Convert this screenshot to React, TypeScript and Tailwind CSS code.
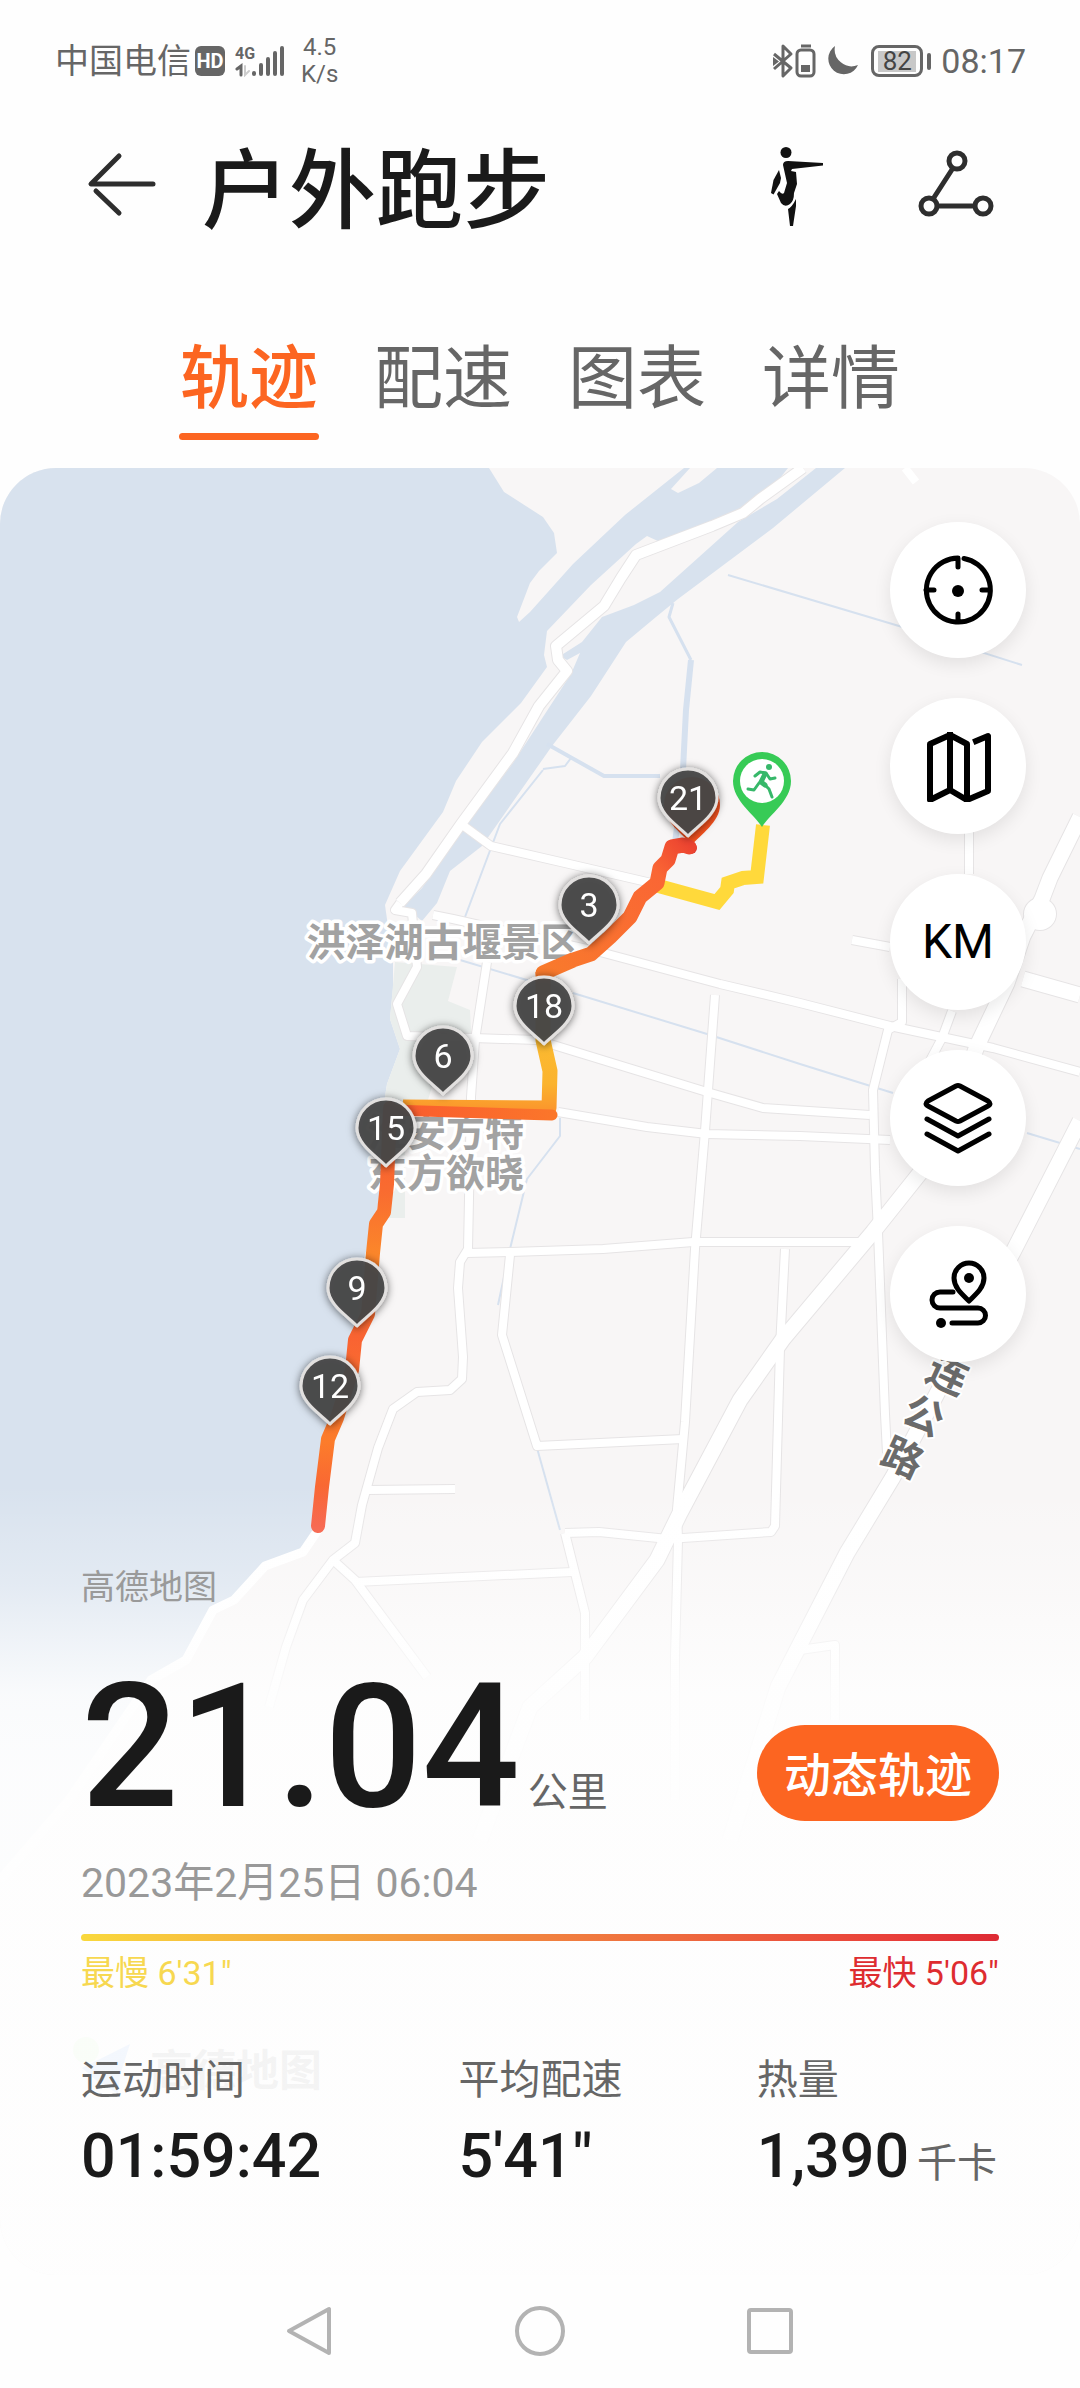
import React from "react";

const tabs = ["轨迹", "配速", "图表", "详情"];

const pins = [
  { km: 21, x: 688, y: 798 },
  { km: 3, x: 589, y: 905 },
  { km: 18, x: 544, y: 1006 },
  { km: 6, x: 443, y: 1056 },
  { km: 15, x: 386, y: 1128 },
  { km: 9, x: 357, y: 1288 },
  { km: 12, x: 330, y: 1386 },
];

const minorRoads = [
  "M461 824L491 846L565 863L660 885",
  "M400 903L395 910L412 913L417 967L397 1004L407 1036L473 1038L537 1040L560 1047L707 1092L763 1108L870 1115",
  "M433 915L453 919L600 952L720 984L800 1003L890 1026L993 1048L1080 1072",
  "M487 962L475 1040L471 1097L468 1249L460 1262L458 1288L463 1357L462 1379L450 1390L417 1392L393 1409L378 1448L362 1505L355 1543L333 1560L303 1600L286 1647L269 1707",
  "M333 1560L355 1580L427 1677",
  "M368 1490L455 1489",
  "M355 1582L572 1572",
  "M467 1253L510 1252L603 1249L693 1242L860 1242",
  "M558 1112L647 1127L707 1134L800 1136L890 1140",
  "M715 995L705 1131L695 1249L685 1422L677 1509L678 1540L675 1657L675 1800",
  "M510 1255L502 1335L537 1446L683 1439",
  "M565 1533L585 1613L585 1720",
  "M565 1533L599 1532L668 1539L771 1532L775 1526L780 1348L785 1249",
  "M902 979L902 1022L888 1030L873 1090L875 1169L878 1232L885 1414L887 1453",
  "M952 1011L942 1038L925 1070",
  "M852 940L890 947",
  "M969 800L969 874",
  "M800 1650L835 1645L835 1720",
];

const majorRoads = [
  "M1080 817L1050 878L1042 899L1023 936L1007 983L977 1046L940 1150L920 1173L873 1232L783 1339L740 1400L680 1513L657 1560L585 1657L530 1707L480 1840",
  "M1080 1121L1013 1252L960 1350L893 1477L847 1553L778 1687L730 1840",
  "M1023 979L1080 995",
];

const embankment =
  "M803 468L760 499L743 513L712 526L636 555L621 578L604 606L556 646L558 660L567 671L539 706L513 753L461 824L426 874L400 903";

function Pin({ x, y, km }: { x: number; y: number; km: number }) {
  return (
    <g filter="url(#pinShadow)">
      <path
        transform={`translate(${x} ${y})`}
        d="M0 38C-8 29 -29 17 -29 0A29 29 0 1 1 29 0C29 17 8 29 0 38Z"
        fill="#474747"
        fillOpacity="0.93"
        stroke="#e2e0df"
        strokeWidth="3"
      />
      <text x={x} y={y + 12} textAnchor="middle" fontSize="34" fill="#fff" className="font-[Roboto,sans-serif]">
        {km}
      </text>
    </g>
  );
}

function MapCanvas() {
  return (
    <svg
      className="absolute inset-0 h-full w-full font-['Noto_Sans_CJK_SC',sans-serif]"
      viewBox="0 468 1080 1809"
      preserveAspectRatio="xMidYMin slice"
      aria-label="跑步轨迹地图"
      strokeLinejoin="round"
      fill="none"
    >
      <defs>
        <filter id="pinShadow" x="-40%" y="-40%" width="180%" height="180%">
          <feDropShadow dx="0" dy="1" stdDeviation="4" floodColor="#000" floodOpacity="0.6" />
        </filter>
        <linearGradient id="upper" gradientUnits="userSpaceOnUse" x1="690" y1="845" x2="543" y2="972">
          <stop offset="0" stopColor="#ec4330" />
          <stop offset="0.22" stopColor="#fa6634" />
          <stop offset="1" stopColor="#f97a2c" />
        </linearGradient>
        <linearGradient id="middle" gradientUnits="userSpaceOnUse" x1="0" y1="972" x2="0" y2="1112">
          <stop offset="0" stopColor="#f97a2c" />
          <stop offset="0.5" stopColor="#fcba30" />
          <stop offset="0.8" stopColor="#fbb32e" />
          <stop offset="1" stopColor="#fb942c" />
        </linearGradient>
        <linearGradient id="cross" gradientUnits="userSpaceOnUse" x1="390" y1="0" x2="555" y2="0">
          <stop offset="0" stopColor="#fa5a2e" />
          <stop offset="1" stopColor="#fb762a" />
        </linearGradient>
        <linearGradient id="lower" gradientUnits="userSpaceOnUse" x1="0" y1="1106" x2="0" y2="1526">
          <stop offset="0" stopColor="#fa5a2e" />
          <stop offset="0.2" stopColor="#f96b30" />
          <stop offset="0.35" stopColor="#fb862a" />
          <stop offset="0.55" stopColor="#f96332" />
          <stop offset="0.8" stopColor="#fc7c2b" />
          <stop offset="1" stopColor="#f6553a" />
        </linearGradient>
      </defs>

      <rect y="468" width="1080" height="1809" fill="#f8f6f6" />

      {/* lake, canal and the land between them */}
      <path
        d="M0 468L788 468L769 492L738 515L660 542L647 536L636 544L591 585L547 631L544 655L547 667L521 703L482 742L456 781L443 812L400 871L385 905L393 962L393 988L390 1019L400 1049L387 1084L383 1110L385 1166L375 1220L363 1262L357 1330L335 1400L322 1450L318 1535L303 1552L265 1563L234 1597L213 1607L186 1657L151 1677L69 1797L0 1880Z"
        fill="#d8e2ee"
      />
      <path
        d="M489 468L504 492L543 517L554 533L557 553L539 571L530 583L517 617L519 622L530 612L573 564L625 515L684 468Z"
        fill="#f8f6f6"
      />
      <path d="M690 468L671 489L678 493L699 483L717 468Z" fill="#f8f6f6" />
      <path
        d="M816 468L777 499L738 522L660 592L634 605L602 617L582 642L560 656L567 660L580 653L571 674L513 763L461 831L422 888L404 906L422 921L437 903L450 871L482 846L552 746L591 696L626 642L656 617L678 599L773 528L845 468Z"
        fill="#d8e2ee"
      />
      <path d="M395 962L457 967L448 1001L470 1010L472 1055L440 1060L425 1110L405 1120L405 1218L384 1218L383 1110L387 1084L400 1049L390 1019Z" fill="#eaeeec" />

      {/* creeks */}
      <g stroke="#d6e1ef" strokeWidth="2">
        <path d="M728 575L899 626L1022 665" />
        <path d="M573 993L707 1034L800 1064L893 1093" />
        <path d="M1027 1133L1080 1149" />
        <path d="M460 960L540 984" />
        <path d="M560 1118L560 1136L527 1179L510 1249L498 1305" />
        <path d="M537 1448L560 1530" />
        <path d="M543 770L500 824L465 917" />
        <path d="M673 603L669 617L691 660" strokeWidth="3" />
        <path d="M691 660L686 710L682 790L674 850" strokeWidth="6" />
        <path d="M547 744L604 776L660 776" strokeWidth="4" />
        <path d="M543 769L565 766L571 758" />
      </g>

      {/* road casings, then road surfaces */}
      <g stroke="#e6e4e5">
        {minorRoads.map((d) => (
          <path key={d} d={d} strokeWidth="10" />
        ))}
        {majorRoads.map((d) => (
          <path key={d} d={d} strokeWidth="17" />
        ))}
        <path d={embankment} strokeWidth="12" />
        <circle cx="1040" cy="914" r="17" fill="#e6e4e5" stroke="none" />
      </g>
      <g stroke="#fff">
        {minorRoads.map((d) => (
          <path key={d} d={d} strokeWidth="8" />
        ))}
        {majorRoads.map((d) => (
          <path key={d} d={d} strokeWidth="15" />
        ))}
        <path d={embankment} strokeWidth="10" />
        <path d="M905 468L916 482" strokeWidth="8" />
        <path d="M318 1530L303 1552L265 1566L234 1600L213 1610L186 1660L151 1680L69 1800L0 1880" strokeWidth="9" />
        <circle cx="1040" cy="914" r="16" fill="#fff" stroke="none" />
      </g>

      {/* place names */}
      <g fill="#a2a2a2" stroke="#fff" strokeWidth="7" fontSize="39" fontWeight="700" paintOrder="stroke">
        <text x="443" y="956" textAnchor="middle">洪泽湖古堰景区</text>
        <text x="524" y="1146" textAnchor="end">淮安方特</text>
        <text x="524" y="1187" textAnchor="end">东方欲晓</text>
      </g>
      <g fill="#6b6b6b" stroke="#fff" strokeWidth="4" fontSize="40" fontWeight="700" textAnchor="middle" paintOrder="stroke">
        <text transform="translate(948 1374) rotate(25)" y="15">连</text>
        <text transform="translate(924 1415) rotate(25)" y="15">公</text>
        <text transform="translate(903 1457) rotate(25)" y="15">路</text>
      </g>

      {/* provider watermark */}
      <path d="M82 2068L130 2044L120 2075L118 2094L96 2080Z" fill="#2f7bf0" />
      <circle cx="86" cy="2050" r="13" fill="#a9ee8c" />
      <text x="150" y="2086" fontSize="43" fontWeight="700" fill="#333">
        高德地图
      </text>

      {/* recorded run */}
      <g strokeWidth="14">
        <path d="M763 825L757 877L743 878L728 883L727 890L717 902L655 885" stroke="#ffd93b" strokeLinejoin="miter" />
        <path d="M543 972L543 1040L550 1071L549 1108L403 1107" stroke="url(#middle)" strokeWidth="15" />
        <path d="M552 1115L390 1110" stroke="url(#cross)" strokeWidth="11" strokeLinecap="round" />
        <path
          d="M390 1108L387 1184L384 1212L376 1224L373 1253L368 1314L355 1340L352 1370L337 1418L328 1439L322 1487L318 1526"
          stroke="url(#lower)"
          strokeLinecap="round"
        />
      </g>

      <path transform="translate(692 805)" d="M0 40C-8 30 -28 17 -28 0A28 28 0 1 1 28 0C28 17 8 30 0 40Z" fill="#f4511e" />
      <circle cx="691" cy="848" r="6" fill="#d8372f" />
      <path
        d="M689 847L683 845L672 847L668 860L660 868L657 883L640 897L630 917L610 937L591 954L573 960L543 973"
        stroke="url(#upper)"
        strokeWidth="15"
        strokeLinecap="round"
      />

      <g transform="translate(762 781)">
        <path d="M0 46C-7 34 -29 20 -29 0A29 29 0 1 1 29 0C29 20 7 34 0 46Z" fill="#37cb56" />
        <circle r="22" fill="#fff" />
        <g stroke="#37b86a" strokeWidth="3" strokeLinecap="round">
          <circle cx="7" cy="-14" r="3" fill="#37b86a" stroke="none" />
          <path d="M-7 -5L-2 -9L4 -8L8 -2L13 -3" />
          <path d="M-14 8L-8 9L-3 2" />
          <path d="M2 3L7 8L10 16" />
          <path d="M3 -7L-1 1L3 4" strokeWidth="5" />
        </g>
      </g>

      {pins.map((p) => (
        <Pin key={p.km} {...p} />
      ))}
    </svg>
  );
}

function MapButton({ label, children }: { label: string; children: React.ReactNode }) {
  return (
    <button
      type="button"
      aria-label={label}
      className="flex size-34 items-center justify-center rounded-full bg-white text-black shadow-[0_6px_18px_rgba(0,0,0,0.09)]"
    >
      {children}
    </button>
  );
}

function Icon({ children }: { children: React.ReactNode }) {
  return (
    <svg className="size-[72px]" viewBox="0 0 72 72" fill="none" stroke="currentColor" strokeWidth="5" strokeLinecap="round" strokeLinejoin="round">
      {children}
    </svg>
  );
}

function StatusBar() {
  return (
    <div className="flex h-[122px] items-center justify-between pr-[54px] pl-[55px] text-[#666]">
      <div className="flex items-center">
        <span className="text-[34px] leading-10">中国电信</span>
        <span className="ml-1 flex h-[30px] w-[30px] items-center justify-center rounded-[6px] bg-[#666] font-[Roboto,sans-serif] text-[20px] font-bold text-white">
          HD
        </span>
        <svg className="ml-[10px] h-8 w-[52px]" viewBox="0 0 52 32" fill="none" stroke="#666" strokeLinecap="round">
          <text x="0" y="14" fontSize="16" fontWeight="700" fill="#666" stroke="none" className="font-[Roboto,sans-serif]">
            4G
          </text>
          <path d="M6 30V21L2 24" strokeWidth="3" />
          <path d="M10 21V30L14 26" stroke="#ccc" strokeWidth="2" />
          <path d="M19 28V29M26 20V29M33 14V29M40 8V29M47 3V29" strokeWidth="4" />
        </svg>
        <span className="ml-[14px] text-center font-[Roboto,sans-serif] text-2xl leading-[27px]">
          4.5
          <br />
          K/s
        </span>
      </div>
      <div className="flex items-center">
        <svg className="h-9 w-[92px]" viewBox="0 0 92 36" fill="none" stroke="#666" strokeWidth="3" strokeLinejoin="round">
          <path d="M3 11L20 25L12 33V3L20 11L3 26" />
          <path d="M2 14L8 18.500L2 23Z" fill="#666" stroke="none" />
          <rect x="26" y="7" width="17" height="26" rx="4" />
          <path d="M30 3H40" strokeWidth="3" />
          <rect x="30" y="22" width="9" height="7" fill="#666" stroke="none" />
          <path d="M64 3A15.500 15.500 0 1 0 87 22A17 17 0 0 1 64 3Z" fill="#666" stroke="none" />
        </svg>
        <span className="ml-2 flex h-8 w-[52px] items-center justify-center rounded-lg border-3 border-[#666]">
          <span className="flex h-[21px] w-[38px] items-center justify-center bg-[#c8c8c8] font-[Roboto,sans-serif] text-[26px] leading-5 text-[#444]">
            82
          </span>
        </span>
        <span className="ml-1 h-[17px] w-1 rounded-full bg-[#666]" />
        <span className="ml-[10px] font-[Roboto,sans-serif] text-[34px] leading-10">08:17</span>
      </div>
    </div>
  );
}

function Header() {
  return (
    <header className="flex h-[132px] items-center pr-[82px] pl-[84px] text-[#1a1a1a]">
      <button type="button" aria-label="返回" className="-mt-2">
        <svg className="h-[72px] w-[76px]" viewBox="0 0 76 72" fill="none" stroke="#2e2e2e" strokeWidth="5" strokeLinecap="round" strokeLinejoin="round">
          <path d="M35 8L7 36H69" />
          <path d="M12 43L35 65" />
        </svg>
      </button>
      <h1 className="ml-[42px] flex-1 pt-2 text-[87px] leading-[120px] font-medium">户外跑步</h1>
      <button type="button" aria-label="跑姿">
        <svg className="h-[86px] w-[72px]" viewBox="0 0 72 86" fill="#111">
          <circle cx="20" cy="7.500" r="5.500" />
          <path d="M17 20Q17 16 22 16L57 18V20.500L26 24L25 26L30 27L31 39L28 48Q28 56 24 59Q19 63 15 58L11 49L13 46Q16 50 18 48L21 38Z" />
          <path d="M13 25L15 33L14 38L7.500 49.500L5 48L7.500 35Z" />
          <path d="M22 64Q26 62 30 54L30 61L27 81H24Z" />
        </svg>
      </button>
      <button type="button" aria-label="分享" className="ml-[76px]">
        <svg className="h-[84px] w-[84px]" viewBox="0 0 84 84" fill="none" stroke="#2e2e2e" strokeWidth="5">
          <circle cx="43" cy="15" r="8" />
          <circle cx="15" cy="60" r="8" />
          <circle cx="69" cy="60" r="8" />
          <path d="M39 22L19 53M23 60H61" />
        </svg>
      </button>
    </header>
  );
}

function Stat({ label, value, unit }: { label: string; value: string; unit?: string }) {
  return (
    <div>
      <dt className="text-[41px] leading-14 text-[#666]">{label}</dt>
      <dd className="mt-3 flex items-baseline gap-2 whitespace-nowrap">
        <span className="font-[Roboto,sans-serif] text-[61px] leading-18 font-medium">{value}</span>
        {unit && <span className="text-[40px] leading-14 text-[#666]">{unit}</span>}
      </dd>
    </div>
  );
}

export default function App() {
  return (
    <div className="flex min-h-screen flex-col bg-[#fefefe] font-[Roboto,'Noto_Sans_CJK_SC',sans-serif] text-[#1a1a1a]">
      <StatusBar />
      <Header />
      <nav className="flex justify-center gap-[54px] pt-20 pb-7">
        {tabs.map((t, i) => (
          <button key={t} type="button" className={i === 0 ? "w-[140px] font-medium text-[#fc6521]" : "w-[140px] text-[#666]"}>
            <span className="block text-[69px] leading-[92px]">{t}</span>
            <span className={i === 0 ? "mt-[7px] block h-[7px] rounded-full bg-[#fc6521]" : "mt-[7px] block h-[7px]"} />
          </button>
        ))}
      </nav>

      <main className="relative overflow-hidden rounded-[56px] pb-[83px]">
        <MapCanvas />
        <div className="absolute inset-x-0 bottom-0 h-[800px] bg-[linear-gradient(to_bottom,rgba(254,254,254,0)_10px,rgba(254,254,254,0.3)_110px,rgba(254,254,254,0.6)_165px,rgba(254,254,254,0.88)_220px,rgba(254,254,254,0.95)_300px)]" />

        <div className="relative flex flex-col items-end gap-10 pt-[54px] pr-[54px]">
          <MapButton label="定位">
            <Icon>
              <path d="M42 4.500A32 32 0 1 1 36 4V13M4 36H12M60 36H68M36 60V68" />
              <circle cx="36" cy="37" r="6" fill="currentColor" stroke="none" />
            </Icon>
          </MapButton>
          <MapButton label="地图类型">
            <svg className="size-[72px]" viewBox="0 0 72 72" fill="none" stroke="currentColor" strokeWidth="6" strokeLinecap="square" strokeLinejoin="round">
              <path d="M54 11L66 6V61L45 70L28 60L8 70V14L28 5L45 14V70M28 5V60" />
            </svg>
          </MapButton>
          <MapButton label="公里标记">
            <span className="font-[Roboto,sans-serif] text-[48px] leading-none">KM</span>
          </MapButton>
          <MapButton label="图层">
            <Icon>
              <path d="M34 4Q36 3 38 4L66 19Q70 22 66 24L38 39Q36 40 34 39L6 24Q2 22 6 19Z" />
              <path d="M5 37L36 54L67 37M5 52L36 69L67 52" />
            </Icon>
          </MapButton>
          <MapButton label="路线">
            <Icon>
              <path d="M47 43C41 37 32 30 32 20A15 15 0 0 1 62 20C62 30 53 37 47 43Z" />
              <circle cx="47" cy="20" r="5" fill="currentColor" stroke="none" />
              <path d="M31 34H18A8 8 0 0 0 18 50H56A7 7 0 0 1 56 65H30" />
              <circle cx="19" cy="65" r="5" fill="currentColor" stroke="none" />
            </Icon>
          </MapButton>
        </div>

        <section className="relative mt-[205px] px-[81px]">
          <p className="text-[34px] leading-10 text-[#9a9a9a]">高德地图</p>
          <div className="mt-[52px] flex items-end justify-between">
            <p className="flex items-baseline gap-2">
              <span className="font-[Roboto,sans-serif] text-[172px] leading-[176px] font-medium">21.04</span>
              <span className="text-[40px] leading-14 text-[#666]">公里</span>
            </p>
            <button type="button" className="mb-[14px] h-24 w-[242px] rounded-full bg-[#fc6521] pt-1 text-[47px] leading-none font-medium text-white">
              动态轨迹
            </button>
          </div>
          <p className="mt-6 text-[41px] leading-12 text-[#999]">2023年2月25日 06:04</p>
          <div className="mt-[27px] h-[7px] rounded-full bg-[linear-gradient(to_right,#f9d83c,#f49a40_35%,#ee6a3e_65%,#e9403a_88%,#dd2a34)]" />
          <div className="mt-[10px] flex justify-between text-[34px] leading-11">
            <span className="text-[#f7d850]">最慢 6'31"</span>
            <span className="text-[#de2c30]">最快 5'06"</span>
          </div>
          <dl className="mt-[57px] grid grid-cols-[377fr_298fr_242fr]">
            <Stat label="运动时间" value="01:59:42" />
            <Stat label="平均配速" value={`5'41"`} />
            <Stat label="热量" value="1,390" unit="千卡" />
          </dl>
        </section>
      </main>

      <nav className="flex h-[111px] items-center justify-center gap-[178px]">
        <button type="button" aria-label="后退">
          <svg className="size-[52px]" viewBox="0 0 52 52" fill="none" stroke="#b3b3b3" strokeWidth="4" strokeLinejoin="round">
            <path d="M45 4V48L5 26Z" />
          </svg>
        </button>
        <button type="button" aria-label="主页">
          <svg className="size-[52px]" viewBox="0 0 52 52" fill="none" stroke="#b3b3b3" strokeWidth="4">
            <circle cx="26" cy="26" r="23" />
          </svg>
        </button>
        <button type="button" aria-label="最近任务">
          <svg className="size-[52px]" viewBox="0 0 52 52" fill="none" stroke="#b3b3b3" strokeWidth="4">
            <rect x="5" y="5" width="42" height="42" rx="2" />
          </svg>
        </button>
      </nav>
    </div>
  );
}
